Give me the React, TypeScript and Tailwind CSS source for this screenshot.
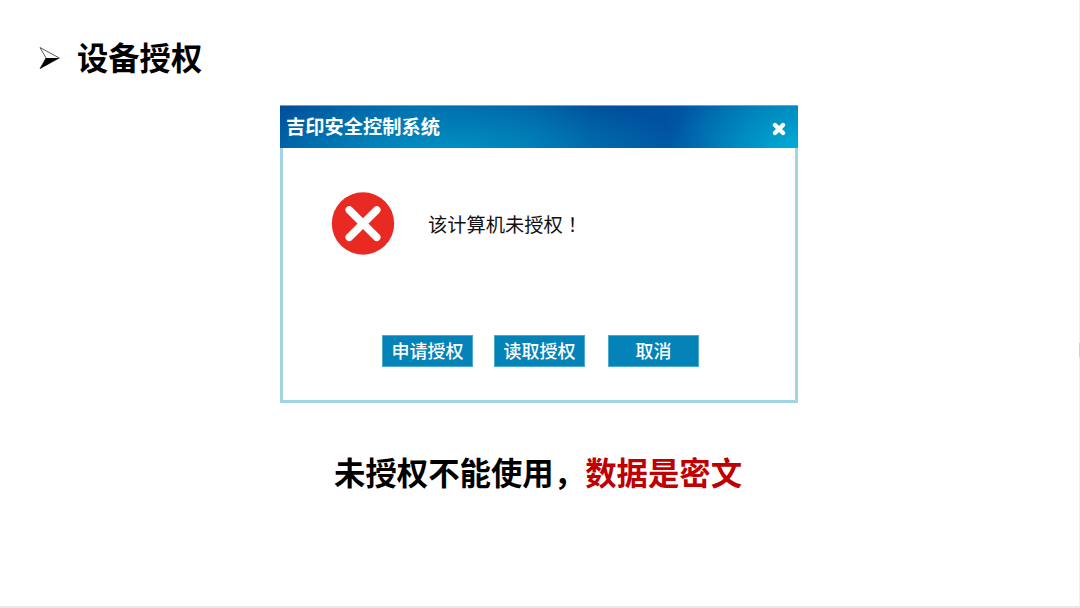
interface DialogButtonProps {
  label: string;
  className?: string;
}

function DialogButton({ label, className = '' }: DialogButtonProps) {
  return (
    <button
      className={`h-8 w-[91px] border border-[#4aaacb] bg-[#0483b8] pb-0.5 text-[18px] leading-[28px] font-medium text-white ${className}`}
    >
      {label}
    </button>
  );
}

function ArrowBullet() {
  return (
    <svg width="22" height="24" viewBox="0 0 22 24" className="mt-px mr-[16px] ml-px shrink-0">
      <path d="M1 1.5 20.3 12 1 22.5 7 12Z" fill="white" stroke="#333" strokeWidth="0.8" />
      <path d="M7 12H20.3L1 22.8Z" fill="black" />
    </svg>
  );
}

function ErrorIcon() {
  return (
    <svg width="64" height="64" viewBox="0 0 64 64" className="shrink-0">
      <circle cx="32" cy="31.5" r="31.2" fill="#e92a23" />
      <path d="M18.3 18 45.7 45.2M45.7 18 18.3 45.2" stroke="white" strokeWidth="7.6" strokeLinecap="round" />
    </svg>
  );
}

function AuthDialog() {
  return (
    <div className="mt-[25px] ml-[280px] flex h-[298px] w-[518px] flex-col">
      {/* Title bar */}
      <div className="flex h-[43px] shrink-0 items-center justify-between border-t border-[#62a6ca] bg-[radial-gradient(ellipse_130px_85px_at_100%_110%,#00b0d7_0%,rgba(0,160,205,0.7)_40%,rgba(0,110,180,0)_100%),radial-gradient(ellipse_240px_66px_at_33%_115%,#0094c3_0%,rgba(0,140,190,0.75)_35%,rgba(0,110,175,0)_100%),linear-gradient(100deg,#004d9a_0%,#0067aa_25%,#005ba3_48%,#004c9a_60%,#0052a0_74%,#0062aa_86%,#0078b5_100%)] pr-3 pl-1.5">
        <h2 className="text-[19.25px] leading-none font-bold text-white">吉印安全控制系统</h2>
        <svg width="14" height="14" viewBox="0 0 14 14" className="mt-[3px]">
          <path d="M3 3 11 11M11 3 3 11" stroke="white" strokeWidth="4.4" strokeLinecap="round" />
        </svg>
      </div>

      {/* Body */}
      <div className="flex-1 border-x-[3px] border-b-[3px] border-[#a3d4e5] bg-white">
        <div className="flex items-center pt-11 pl-[48px]">
          <ErrorIcon />
          <p className="mt-0.5 ml-[33px] text-[19.25px] leading-none text-[#111]">
            该计算机未授权<span className="ml-[5px]">！</span>
          </p>
        </div>
        <div className="mt-[79px] ml-[99px] flex">
          <DialogButton label="申请授权" />
          <DialogButton label="读取授权" className="ml-[21px]" />
          <DialogButton label="取消" className="ml-[23px]" />
        </div>
      </div>
    </div>
  );
}

export default function App() {
  return (
    <div className="flex h-[608px] w-[1080px] flex-col overflow-hidden bg-white font-['Noto_Sans_CJK_SC',sans-serif]">
      <div className="flex flex-1">
        <main className="w-[1079px] pt-[34px]">
          <h1 className="flex h-[46px] items-center pl-[38px] text-[31.3px] leading-[46px] font-bold text-black">
            <ArrowBullet />
            设备授权
          </h1>
          <AuthDialog />
          <p className="mt-[46px] ml-[334px] text-[31.4px] leading-[46px] font-bold whitespace-nowrap text-black">
            未授权不能使用，<span className="text-[#c00000]">数据是密文</span>
          </p>
        </main>
        {/* Scroll track */}
        <div className="w-px bg-[#f0f0f0] pt-[343px]">
          <div className="h-3.5 bg-[#d0d0d0]" />
        </div>
      </div>
      <div className="h-0.5 bg-[#e8e8e8]" />
    </div>
  );
}
